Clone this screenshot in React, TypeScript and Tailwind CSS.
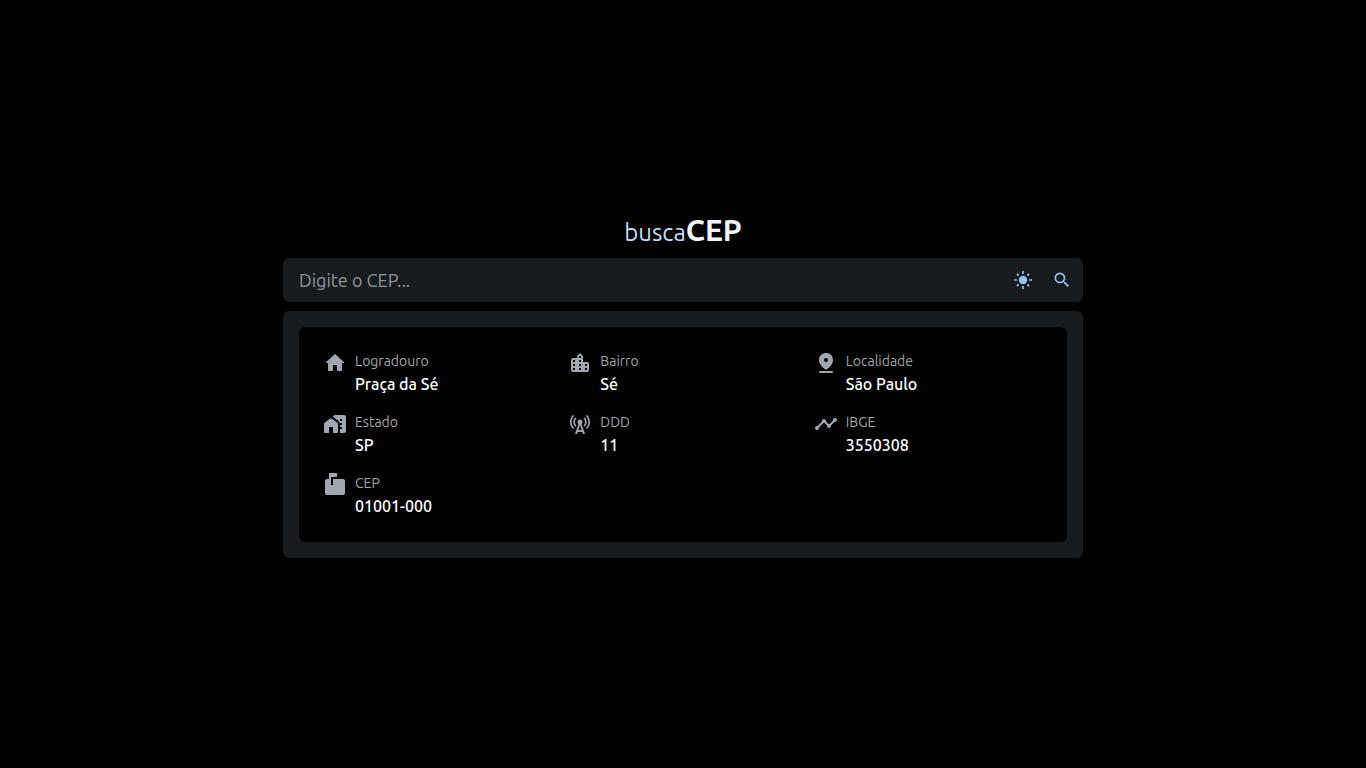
import { useState } from "react";
import type { ComponentType, FormEvent, SVGProps } from "react";
import {
  MdCellTower,
  MdMarkunreadMailbox,
  MdSearch,
  MdTimeline,
} from "react-icons/md";

type IconProps = SVGProps<SVGSVGElement> & { size?: number };

function Glyph({ size = 24, d, ...props }: IconProps & { d: string }) {
  return (
    <svg
      viewBox="0 0 24 24"
      width={size}
      height={size}
      fill="currentColor"
      fillRule="evenodd"
      aria-hidden="true"
      {...props}
    >
      <path d={d} />
    </svg>
  );
}

const HomeIcon = (props: IconProps) => (
  <Glyph
    {...props}
    d="M10 19v-5h4v5c0 .55.45 1 1 1h3c.55 0 1-.45 1-1v-7h1.7c.46 0 .68-.57.33-.87L12.67 3.6c-.38-.34-.96-.34-1.34 0l-8.36 7.53c-.34.3-.13.87.33.87H5v7c0 .55.45 1 1 1h3c.55 0 1-.45 1-1z"
  />
);

const CityIcon = (props: IconProps) => (
  <Glyph
    {...props}
    d="M15 11V5.83a2 2 0 0 0-.59-1.42L12.7 2.7a1 1 0 0 0-1.41 0L9.59 4.41A2 2 0 0 0 9 5.83V7H5a2 2 0 0 0-2 2v10a2 2 0 0 0 2 2h14a2 2 0 0 0 2-2v-6a2 2 0 0 0-2-2zM5 17h2v2H5zM5 13h2v2H5zM5 9h2v2H5zM11 17h2v2h-2zM11 13h2v2h-2zM11 9h2v2h-2zM11 5h2v2h-2zM17 17h2v2h-2zM17 13h2v2h-2z"
  />
);

const PinIcon = (props: IconProps) => (
  <Glyph
    {...props}
    d="M12 2c3.38 0 7 2.46 7 7.15 0 2.98-2.13 6.12-6.39 9.39-.36.28-.86.28-1.22 0C7.13 15.26 5 12.13 5 9.15 5 4.46 8.62 2 12 2zM12 7a2 2 0 1 0 0 4 2 2 0 0 0 0-4zM6 20h12a1 1 0 0 1 0 2H6a1 1 0 0 1 0-2z"
  />
);

const HomeWorkIcon = (props: IconProps) => (
  <Glyph
    {...props}
    d="M1 12.03V20a1 1 0 0 0 1 1h4v-6h4v6h4a1 1 0 0 0 1-1v-7.97a2 2 0 0 0-.84-1.63l-5-3.57a2 2 0 0 0-2.32 0l-5 3.57A2 2 0 0 0 1 12.03zM21 3h-9a2 2 0 0 0-2 1.97l5.34 3.82A4 4 0 0 1 17 12.03V21h4a2 2 0 0 0 2-2V5a2 2 0 0 0-2-2zM17 7h2v2h-2zM17 11h2v2h-2zM17 15h2v2h-2z"
  />
);

function SunIcon() {
  return (
    <svg viewBox="0 0 20 20" width={20} height={20} aria-hidden="true">
      <circle cx="10" cy="10" r="4.2" fill="currentColor" />
      <path
        d="M10 1v3M10 16v3M1 10h3M16 10h3M3.9 3.9l1.7 1.7M14.4 14.4l1.7 1.7M3.9 16.1l1.7-1.7M14.4 5.6l1.7-1.7"
        stroke="currentColor"
        strokeWidth="1.7"
        fill="none"
      />
    </svg>
  );
}

type Field = { label: string; value: string; icon: ComponentType<IconProps> };

const fields: Field[] = [
  { label: "Logradouro", value: "Praça da Sé", icon: HomeIcon },
  { label: "Bairro", value: "Sé", icon: CityIcon },
  { label: "Localidade", value: "São Paulo", icon: PinIcon },
  { label: "Estado", value: "SP", icon: HomeWorkIcon },
  { label: "DDD", value: "11", icon: MdCellTower },
  { label: "IBGE", value: "3550308", icon: MdTimeline },
  { label: "CEP", value: "01001-000", icon: MdMarkunreadMailbox },
];

function SearchBar() {
  const [cep, setCep] = useState("");
  return (
    <form
      onSubmit={(e: FormEvent) => e.preventDefault()}
      className="mt-2 flex h-11 items-center rounded-md bg-[#171b1e] pr-[3px] pl-4 text-[#90c4f9]"
    >
      <input
        type="text"
        aria-label="CEP"
        placeholder="Digite o CEP..."
        value={cep}
        onChange={(e) => setCep(e.target.value)}
        className="min-w-0 flex-1 bg-transparent text-lg text-[#f1f5f9] outline-none placeholder:text-[#939698]"
      />
      <button type="button" aria-label="Alternar tema" className="p-2">
        <SunIcon />
      </button>
      <button type="submit" aria-label="Buscar" className="ml-[3px] p-2">
        <MdSearch size={20} />
      </button>
    </form>
  );
}

function FieldItem({ label, value, icon: Icon }: Field) {
  return (
    <div className="flex gap-2">
      <Icon size={24} className="shrink-0 text-[#a1a7b0]" />
      <dl className="min-w-0">
        <dt className="text-sm/[21px] text-[#a1a7ac]">{label}</dt>
        <dd className="text-base/6 font-medium text-white">{value}</dd>
      </dl>
    </div>
  );
}

export default function App() {
  return (
    <main className="flex min-h-screen items-center justify-center bg-black font-['Ubuntu','Noto_Sans',sans-serif]">
      <div className="w-full max-w-[800px]">
        <h1 className="flex h-10 items-baseline justify-center leading-10">
          <span className="text-2xl/10 font-normal text-[#c8dff5]">busca</span>
          <span className="text-3xl/10 font-bold text-[#f1f5fb]">CEP</span>
        </h1>
        <SearchBar />
        <section className="mt-[9px] rounded-md bg-[#171b1e] p-4">
          <div className="grid grid-cols-1 gap-4 rounded-md bg-black p-6 sm:grid-cols-3">
            {fields.map((field) => (
              <FieldItem key={field.label} {...field} />
            ))}
          </div>
        </section>
      </div>
    </main>
  );
}
